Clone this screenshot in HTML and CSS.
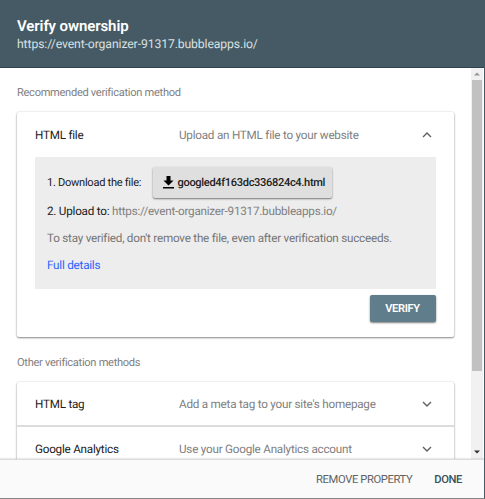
FILE: index.html
```html
<!DOCTYPE html>
<html lang="en">
<head>
    <meta charset="UTF-8">
    <meta name="viewport" content="width=device-width, initial-scale=1.0">
    <title>Verify ownership</title>
    <link rel="stylesheet" href="styles.css">
</head>
<body>
    <div class="dialog">
        <div class="header">
            <div class="title">Verify ownership</div>
            <div class="site">https://event-organizer-91317.bubbleapps.io/</div>
        </div>

        <div class="main">
            <div class="content">
                <div class="label">Recommended verification method</div>
                <div class="card">
                    <div class="method open">
                        <span class="name">HTML file</span>
                        <span class="desc">Upload an HTML file to your website</span>
                        <svg class="arrow" width="10" height="6" viewBox="0 0 10 6"><path d="M1 5l4-4 4 4"/></svg>
                    </div>
                    <div class="steps">
                        <div class="step download">
                            <span class="step-one">1. Download the file:</span>
                            <button class="file-button">
                                <svg width="11" height="13" viewBox="0 0 11 13"><path d="M3.500 0h4v4.500H10.500L5.500 9.500.5 4.500h3zM0 11h11v1.500H0z"/></svg>
                                <span>googled4f163dc336824c4.html</span>
                            </button>
                        </div>
                        <div class="step upload"><span class="step-two">2. Upload to:</span> <span class="url">https://event-organizer-91317.bubbleapps.io/</span></div>
                        <div class="step note">To stay verified, don't remove the file, even after verification succeeds.</div>
                        <a class="details" href="#">Full details</a>
                    </div>
                    <div class="card-actions">
                        <button class="verify">VERIFY</button>
                    </div>
                </div>

                <div class="label other">Other verification methods</div>
                <div class="card">
                    <div class="method">
                        <span class="name">HTML tag</span>
                        <span class="desc">Add a meta tag to your site's homepage</span>
                        <svg class="arrow" width="10" height="6" viewBox="0 0 10 6"><path d="M1 1l4 4 4-4"/></svg>
                    </div>
                    <div class="method">
                        <span class="name">Google Analytics</span>
                        <span class="desc">Use your Google Analytics account</span>
                        <svg class="arrow" width="10" height="6" viewBox="0 0 10 6"><path d="M1 1l4 4 4-4"/></svg>
                    </div>
                </div>
            </div>
            <div class="scrollbar">
                <div class="scroll-up"><svg width="6" height="4" viewBox="0 0 6 4"><path d="M0 3.500L3 .5l3 3z"/></svg></div>
                <div class="thumb"></div>
                <div class="scroll-down"><svg width="6" height="4" viewBox="0 0 6 4"><path d="M0 .5h6l-3 3z"/></svg></div>
            </div>
        </div>

        <div class="footer">
            <a class="remove" href="#">REMOVE PROPERTY</a>
            <a class="done" href="#">DONE</a>
        </div>
    </div>
</body>
</html>
```

FILE: styles.css
```css
* {
    box-sizing: border-box;
}
body {
    margin: 0;
    font-family: Roboto, Arial, sans-serif;
    font-size: 11.7px;
    letter-spacing: -0.23px;
    text-rendering: geometricPrecision;
    color: #212121;
    background-color: white;
}
a {
    text-decoration: none;
}
button {
    border: none;
    font-family: inherit;
    text-rendering: inherit;
    cursor: pointer;
}
svg {
    flex-shrink: 0;
}
.dialog {
    display: flex;
    flex-direction: column;
    height: 499px;
    border-right: 1px solid #455a64;
    border-bottom: 1px solid #858585;
    overflow: hidden;
}

.header {
    height: 68px;
    padding: 17px 17px 0 17px;
    background-color: #455a64;
    border-bottom: 1px solid #2f444f;
    color: white;
}
.title {
    font-size: 15px;
    font-weight: 600;
    line-height: 18px;
    letter-spacing: -0.1px;
}
.site {
    font-size: 12.2px;
    line-height: 18px;
    letter-spacing: -0.1px;
    color: #dae0e2;
}

.main {
    display: flex;
    flex: 1;
    min-height: 0;
}
.content {
    flex: 1;
    padding: 17px 17.5px 0 17px;
    overflow: hidden;
}
.label {
    height: 27px;
    font-size: 11.1px;
    line-height: 16px;
    letter-spacing: -0.3px;
    color: #808080;
}
.other {
    margin-top: 18px;
}
.card {
    border-radius: 2px;
    background-color: white;
    box-shadow: 0 1px 2px rgba(0, 0, 0, 0.45), 0 0 2px rgba(0, 0, 0, 0.15);
}
.method {
    display: flex;
    align-items: center;
    height: 45px;
    padding: 0 22px 0 18px;
    border-bottom: 2px solid #dcdcdc;
}
.open {
    border-bottom: none;
}
.name {
    width: 144px;
}
.desc {
    flex: 1;
    color: #808080;
}
.arrow path {
    fill: none;
    stroke: #606060;
    stroke-width: 1.4;
}

.steps {
    height: 132px;
    margin: 0 18px;
    padding: 10px 12px 0;
    background-color: #ededed;
}
.download {
    display: flex;
    align-items: center;
    height: 31px;
}
.step-one {
    width: 106px;
    font-size: 11.1px;
    letter-spacing: -0.29px;
}
.file-button {
    display: flex;
    align-items: center;
    gap: 3.5px;
    width: 179px;
    height: 31px;
    padding: 0 0 0 10px;
    border-radius: 2px;
    background-color: #dfdfdf;
    box-shadow: 0 1px 2px rgba(0, 0, 0, 0.5);
    font-size: 11.1px;
    font-weight: 500;
    letter-spacing: -0.34px;
    color: #212121;
}
.upload {
    margin-top: 5px;
    line-height: 16px;
}
.url {
    color: #808080;
}
.note {
    margin-top: 11px;
    line-height: 16px;
    color: #757575;
}
.details {
    display: block;
    margin-top: 11px;
    line-height: 16px;
    color: #2962ff;
}
.card-actions {
    display: flex;
    justify-content: flex-end;
    height: 48px;
    padding: 6px 18px 0;
}
.verify {
    width: 66px;
    height: 27px;
    padding: 0;
    border-radius: 2px;
    background-color: #607d8b;
    box-shadow: 0 1px 2px rgba(0, 0, 0, 0.5);
    font-size: 11.1px;
    font-weight: 600;
    letter-spacing: -0.35px;
    color: white;
}

.scrollbar {
    display: flex;
    flex-direction: column;
    width: 12px;
    margin-right: 1px;
    background-color: #f1f1f1;
}
.scroll-up,
.scroll-down {
    display: flex;
    align-items: center;
    justify-content: center;
    height: 12px;
}
.scroll-up {
    fill: #969696;
}
.scroll-down {
    margin-top: auto;
    height: 15px;
    fill: #303030;
}
.thumb {
    height: 291px;
    margin: 0 1px;
    background-color: #c1c1c1;
}

.footer {
    display: flex;
    align-items: center;
    justify-content: flex-end;
    gap: 22px;
    height: 39px;
    padding-right: 22px;
    background-color: #fafafa;
    border-top: 1px solid #dcdcdc;
    box-shadow: 0 -1px 1px rgba(0, 0, 0, 0.08);
    font-size: 11.2px;
    letter-spacing: -0.38px;
    z-index: 1;
}
.remove {
    color: #616161;
}
.done {
    font-weight: 500;
    color: #37505c;
}
```
